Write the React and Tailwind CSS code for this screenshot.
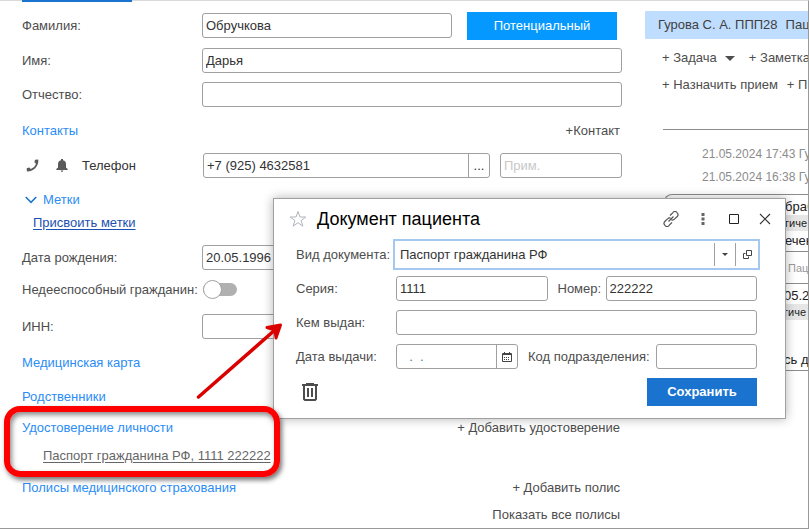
import React, { useState } from "react";

const Field = ({ id, label, value = "", className = "", children }) => (
  <div className={`flex items-center h-[25px] ${className}`}>
    <label htmlFor={id} className="w-[180px] shrink-0 whitespace-nowrap">
      {label}
    </label>
    <input
      id={id}
      defaultValue={value}
      className="h-full min-w-0 flex-1 rounded-[3px] border border-[#a0a0a0] bg-white px-[3px] text-[#333]"
    />
    {children}
  </div>
);

const SectionLink = ({ children }) => (
  <a href="#" className="whitespace-nowrap text-[#2b8df5]">
    {children}
  </a>
);

const Command = ({ children, className = "" }) => (
  <button type="button" className={`whitespace-nowrap text-[#4d4d4d] ${className}`}>
    {children}
  </button>
);

const PatientForm = () => {
  const [incapable, setIncapable] = useState(false);

  return (
    <form className="flex min-w-0 flex-1 flex-col pl-[22px] pt-3 text-[#4d4d4d]">
      <Field id="surname" label="Фамилия:" value="Обручкова">
        <button
          type="button"
          className="ml-[15px] mr-[5px] h-7 w-[150px] shrink-0 bg-[#0599ff] text-white"
        >
          Потенциальный
        </button>
      </Field>
      <Field id="name" label="Имя:" value="Дарья" className="mt-[10px]" />
      <Field id="patronymic" label="Отчество:" className="mt-[9px]" />

      <div className="mt-[14px] flex h-5 items-center justify-between pr-[2px]">
        <SectionLink>Контакты</SectionLink>
        <Command>+Контакт</Command>
      </div>

      <div className="mt-3 flex h-[25px] items-center">
        <svg viewBox="0 0 13 13" className="ml-[4px] h-[13px] w-[13px]" fill="#5a5a5a">
          <path d="M9.300 .8 11.600 .5Q12.400.5 12.400 1.500C12.300 7.600 7.800 12.200 1.600 12.500Q.8 12.500.8 11.800L.7 9.800Q.7 9.300 1.200 9.100L3.400 8.500 4.800 9.900C7.200 9 9.200 7 10 4.700L8.500 3.400 8.800 1.300Q8.900.9 9.300.8Z" />
        </svg>
        <svg viewBox="0 0 12 13" className="ml-[17px] h-[13px] w-3" fill="#5a5a5a">
          <path d="M5 0h2v1.200Q10 2 10 5v3.500L11.700 10v1H.3v-1L2 8.500V5Q2 2 5 1.200zM4.700 11.600h2.600Q7 13 6 13t-1.300-1.400z" />
        </svg>
        <label htmlFor="phone" className="ml-[14px] w-[121px] shrink-0 text-[#333]">
          Телефон
        </label>
        <div className="flex h-full min-w-0 flex-1 rounded-[3px] border border-[#a0a0a0]">
          <input
            id="phone"
            defaultValue="+7 (925) 4632581"
            className="min-w-0 flex-1 px-[3px] text-[#333]"
          />
          <button type="button" className="w-[21px] border-l border-[#a0a0a0] text-[#333]">
            ...
          </button>
        </div>
        <input
          aria-label="Примечание"
          placeholder="Прим."
          className="ml-[10px] h-full w-[122px] shrink-0 rounded-[3px] border border-[#a0a0a0] px-[3px] placeholder:text-[#c8c8c8]"
        />
      </div>

      <div className="mt-3 flex h-5 items-center">
        <svg viewBox="0 0 12 8" className="mr-[6px] ml-[3px] h-2 w-3" fill="none" stroke="#1a73cf" strokeWidth="1.5">
          <path d="M.7 1 6 6.4 11.3 1" />
        </svg>
        <SectionLink>Метки</SectionLink>
      </div>
      <div className="mt-[3px] flex h-5 items-center pl-[11px]">
        <a href="#" className="text-[#1c50b0] underline underline-offset-2">
          Присвоить метки
        </a>
      </div>

      <Field id="birth" label="Дата рождения:" value="20.05.1996" className="mt-3" />
      <label className="mt-[7px] flex h-[25px] items-center">
        <span className="w-[181px] whitespace-nowrap">Недееспособный гражданин:</span>
        <input
          type="checkbox"
          className="peer sr-only"
          checked={incapable}
          onChange={(e) => setIncapable(e.target.checked)}
        />
        <span className="relative h-[13px] w-[34px] rounded-full bg-[#b0b0b0] before:absolute before:-top-[3px] before:left-0 before:h-[19px] before:w-[19px] before:rounded-full before:border before:border-[#a0a0a0] before:bg-white peer-checked:before:left-[15px]" />
      </label>
      <Field id="inn" label="ИНН:" className="mt-3" />

      <div className="mt-[14px] flex h-5 items-center">
        <SectionLink>Медицинская карта</SectionLink>
      </div>
      <div className="mt-[14px] flex h-5 items-center">
        <SectionLink>Родственники</SectionLink>
      </div>

      <div className="relative mt-[11px]">
        <div className="flex h-5 items-center justify-between pr-[2px]">
          <SectionLink>Удостоверение личности</SectionLink>
          <Command>+ Добавить удостоверение</Command>
        </div>
        <div className="mt-2 flex h-5 items-center pl-[21px]">
          <a href="#" className="whitespace-nowrap text-[#666] underline underline-offset-2">
            Паспорт гражданина РФ, 1111 222222
          </a>
        </div>
        <div className="pointer-events-none absolute -left-[18px] -top-3 z-20 h-[71px] w-[276px] rounded-2xl border-[6px] border-[#fe0000] shadow-[2px_3px_5px_rgba(0,0,0,0.55),inset_2px_3px_5px_rgba(0,0,0,0.45)]" />
      </div>

      <div className="mt-3 flex h-5 items-center justify-between pr-[2px]">
        <SectionLink>Полисы медицинского страхования</SectionLink>
        <Command>+ Добавить полис</Command>
      </div>
      <div className="mt-[7px] flex h-5 items-center justify-end pr-[2px]">
        <Command>Показать все полисы</Command>
      </div>
    </form>
  );
};

const HistoryPanel = () => (
  <aside className="w-[163px] shrink-0 overflow-hidden whitespace-nowrap pt-[10px] text-[#4d4d4d]">
    <div className="flex h-7 items-center gap-2 bg-[#bfdeff] pl-[13px] text-[#404040]">
      <span>Гурова С. А. ППП28</span>
      <span>Пац</span>
    </div>
    <div className="mt-[9px] flex h-5 items-center pl-[17px]">
      <Command>+ Задача</Command>
      <span className="ml-2 mr-[14px] border-x-[5px] border-t-[5px] border-x-transparent border-t-[#4d4d4d]" />
      <Command>+ Заметка</Command>
    </div>
    <div className="mt-[7px] flex h-5 items-center gap-[9px] pl-[17px]">
      <Command>+ Назначить прием</Command>
      <Command>+ П</Command>
    </div>
    <div className="ml-[18px] mt-[34px] border-t border-[#8c8c8c]" />
    <div className="mt-[13px] pl-[57px] text-[12px] leading-[23px] text-[#8c8c8c]">
      <div>21.05.2024 17:43 Гуро</div>
      <div>21.05.2024 16:38 Гуро</div>
    </div>
    <div className="ml-[19px] mt-[5px] h-[58px] rounded-tl-lg border-y border-l border-[#8c8c8c] pl-[120px] pt-1 text-[#222]">
      <div className="h-4 leading-4">браб</div>
      <div className="h-4 bg-[#e6e6e6] text-[11px] leading-4">гиче</div>
      <div className="h-5 leading-5">ечен</div>
    </div>
    <div className="ml-[19px] flex h-8 items-center border-b border-[#8c8c8c] pl-[124px] text-[11px] text-[#999]">
      Пац
    </div>
    <div className="ml-[19px] h-[87px] border-b border-[#8c8c8c] pl-[120px] pt-1 text-[#222]">
      <div className="h-4 leading-4">05.2</div>
      <div className="h-4 bg-[#e6e6e6] text-[11px] leading-4">гиче</div>
      <div className="mt-[30px] leading-5">сь д</div>
    </div>
  </aside>
);

const inputStyle = "h-[25px] min-w-0 rounded-[3px] border border-[#a0a0a0] px-[3px] text-[#333]";

const DocumentDialog = () => (
  <div
    role="dialog"
    aria-labelledby="dialog-title"
    className="absolute left-[273px] right-[22px] top-[197px] z-10 h-[221px] border border-[#a0a0a0] bg-white pl-[22px] pr-7 text-[#4d4d4d] shadow-[0_0_10px_rgba(0,0,0,0.3)]"
  >
    <div className="-ml-[7px] -mr-[14px] flex h-10 items-center">
      <svg viewBox="0 0 18 18" className="h-[18px] w-[18px]" fill="none" stroke="#b0b4ba">
        <path d="M9 1.500 11 7h5.800l-4.700 3.500 1.800 5.700L9 12.700l-4.900 3.500 1.800-5.700L1.200 7H7z" />
      </svg>
      <h1 id="dialog-title" className="ml-[10px] flex-1 text-[18px] text-black">
        Документ пациента
      </h1>
      <button type="button" aria-label="Ссылка">
        <svg viewBox="0 0 16 16" className="h-4 w-4" fill="none" stroke="#555" strokeWidth="1.2">
          <path d="M7 4.500 9.700 1.800a2.600 2.600 0 0 1 4.500 0 2.700 2.700 0 0 1 0 3.700L11.500 8.200a2.800 2.800 0 0 1-3 .7M9 11.500l-2.700 2.700a2.600 2.600 0 0 1-4.500 0 2.700 2.700 0 0 1 0-3.700L4.500 7.800a2.800 2.800 0 0 1 3-.7M5.500 10.500l5-5" />
        </svg>
      </button>
      <button type="button" aria-label="Ещё" className="ml-[22px]">
        <svg viewBox="0 0 4 12" className="h-3 w-1" fill="#666">
          <path d="M.5 0h3v3h-3zM.5 4.500h3v3h-3zM.5 9h3v3h-3z" />
        </svg>
      </button>
      <button type="button" aria-label="Развернуть" className="ml-6">
        <svg viewBox="0 0 10 10" className="h-[10px] w-[10px]" fill="none" stroke="#222">
          <path d="M.5.5h9v9h-9z" />
        </svg>
      </button>
      <button type="button" aria-label="Закрыть" className="ml-5">
        <svg viewBox="0 0 12 12" className="h-3 w-3" fill="none" stroke="#333" strokeWidth="1.1">
          <path d="m1 1 10 10M11 1 1 11" />
        </svg>
      </button>
    </div>

    <div className="-mr-[3px] flex items-center">
      <label htmlFor="doc-type" className="w-[97px] shrink-0 whitespace-nowrap">
        Вид документа:
      </label>
      <div className="flex h-[31px] min-w-0 flex-1 items-center border-2 border-[#a5c8f0]">
        <input
          id="doc-type"
          defaultValue="Паспорт гражданина РФ"
          className="h-full min-w-0 flex-1 px-[5px] text-[#333]"
        />
        <button type="button" aria-label="Выбрать" className="flex h-[23px] w-[21px] items-center justify-center border-l border-[#a0a0a0]">
          <span className="border-x-[3px] border-t-[3px] border-x-transparent border-t-[#444]" />
        </button>
        <button type="button" aria-label="Открыть" className="flex h-[23px] w-[23px] items-center justify-center border-l border-[#a0a0a0]">
          <svg viewBox="0 0 9 9" className="h-[9px] w-[9px]" fill="none" stroke="#444">
            <path d="M3.500.5h5v5h-5zM2.500 3.500h-2v5h5v-2" />
          </svg>
        </button>
      </div>
    </div>

    <div className="mt-[6px] flex items-center">
      <label htmlFor="series" className="w-[100px] shrink-0">Серия:</label>
      <input id="series" defaultValue="1111" className={`${inputStyle} flex-1`} />
      <label htmlFor="number" className="ml-[10px] w-12 shrink-0">Номер:</label>
      <input id="number" defaultValue="222222" className={`${inputStyle} flex-1`} />
    </div>

    <div className="mt-[9px] flex items-center">
      <label htmlFor="issuer" className="w-[100px] shrink-0">Кем выдан:</label>
      <input id="issuer" className={`${inputStyle} flex-1`} />
    </div>

    <div className="mt-[9px] flex items-center">
      <label htmlFor="issued" className="w-[100px] shrink-0">Дата выдачи:</label>
      <div className="flex h-[25px] w-[122px] shrink-0 rounded-[3px] border border-[#a0a0a0]">
        <input id="issued" defaultValue="  .  ." className="min-w-0 flex-1 whitespace-pre px-[5px] text-[#3d7f9a]" />
        <button type="button" aria-label="Календарь" className="flex w-[21px] items-center justify-center border-l border-[#a0a0a0]">
          <svg viewBox="0 0 10 10" className="h-[10px] w-[10px]" fill="none" stroke="#444">
            <path d="M.5 1.500h9v8h-9zM0 2.500h10M2.500 0v2M7.500 0v2" />
            <path d="M2 5.500h6M2 7.500h6" strokeDasharray="1 1" />
          </svg>
        </button>
      </div>
      <label htmlFor="dept" className="ml-[10px] w-[128px] shrink-0 whitespace-nowrap">
        Код подразделения:
      </label>
      <input id="dept" className={`${inputStyle} flex-1`} />
    </div>

    <div className="mt-[9px] flex h-7 items-center justify-between">
      <button type="button" aria-label="Удалить" className="ml-[6px]">
        <svg viewBox="0 0 16 18" className="h-[18px] w-4" fill="none" stroke="#4d4d4d" strokeWidth="2">
          <path d="M0 2h16M4 1h8M2 2v14l1 1h10l1-1V2" />
          <path d="M6 5v9M10 5v9" />
        </svg>
      </button>
      <button type="button" className="h-full w-[110px] bg-[#1a73cf] font-bold text-white">
        Сохранить
      </button>
    </div>
  </div>
);

export default function App() {
  return (
    <div className="relative flex min-h-screen gap-[23px] border-b border-r border-t border-b-[#999] border-r-[#999] border-t-[#d9d9d9] bg-white font-['Liberation_Sans',Arial,sans-serif] text-[13px] leading-4">
      <div className="absolute -top-px left-[22px] h-[2px] w-[110px] bg-[#1a73cf]" />
      <PatientForm />
      <HistoryPanel />
      <DocumentDialog />
      {/* pointer from the document link to the dialog */}
      <svg viewBox="0 0 92 80" className="pointer-events-none absolute left-[194px] top-[320px] z-20 h-20 w-[92px]" fill="none" stroke="#db0000" strokeLinecap="round" strokeLinejoin="round">
        <path d="M4.500 76 82 8" strokeWidth="3.500" />
        <path d="M73 6.500 86.500 4 82 17 81 9z" fill="#db0000" strokeWidth="3" />
      </svg>
    </div>
  );
}
